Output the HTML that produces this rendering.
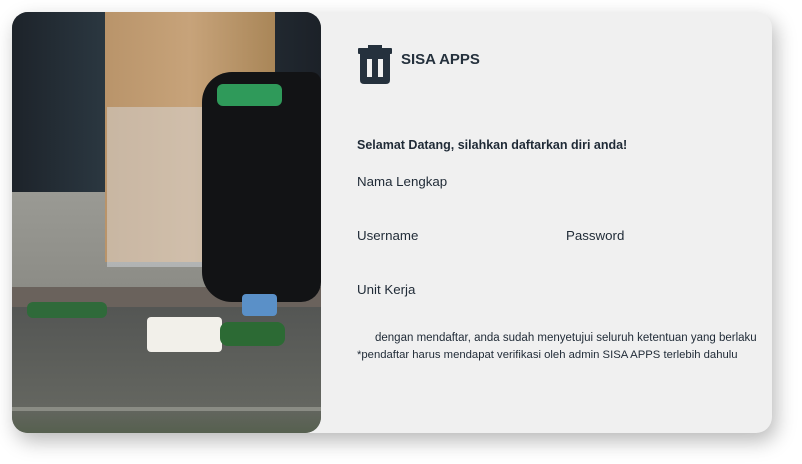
<!DOCTYPE html>
<html><head><style>
body{margin:0;width:802px;height:464px;background:#fff;font-family:"Liberation Sans",sans-serif;position:relative;overflow:hidden}
.card{position:absolute;left:12px;top:12px;width:760px;height:421px;background:#f0f0f0;border-radius:16px;box-shadow:4px 8px 20px rgba(0,0,0,.28)}
.photo{position:absolute;left:12px;top:12px;width:309px;height:421px;border-radius:16px;overflow:hidden;background:#5b5b58}
.photo div{position:absolute}
.t{position:absolute;color:#1f2a36;font-size:13px;white-space:nowrap}
</style></head><body>
<div class="card"></div>
<div class="photo">
 <div style="left:0;top:0;width:309px;height:180px;background:linear-gradient(90deg,#1d232a,#2f3e48 40%,#1c2128)"></div>
 <div style="left:0;top:180px;width:309px;height:110px;background:linear-gradient(#9a9a94,#8a8a84)"></div>
 <div style="left:0;top:275px;width:309px;height:20px;background:#6a625c"></div>
 <div style="left:0;top:295px;width:309px;height:126px;background:linear-gradient(#545654,#646660 80%,#56604f)"></div>
 <div style="left:0;top:395px;width:309px;height:4px;background:#8a8c84"></div>
 <div style="left:93px;top:0;width:170px;height:250px;background:linear-gradient(90deg,#b9946a,#c7a37a 50%,#a98658)"></div>
 <div style="left:95px;top:95px;width:100px;height:160px;background:rgba(220,225,230,.45)"></div>
 <div style="left:190px;top:60px;width:119px;height:230px;background:#121315;border-radius:30px 10px 20px 30px"></div>
 <div style="left:205px;top:72px;width:65px;height:22px;background:#2f9a5a;border-radius:6px"></div>
 <div style="left:135px;top:305px;width:75px;height:35px;background:#f2f0ea;border-radius:4px"></div>
 <div style="left:208px;top:310px;width:65px;height:24px;background:#2c6a34;border-radius:8px"></div>
 <div style="left:15px;top:290px;width:80px;height:16px;background:#2f6a3a;border-radius:6px"></div>
 <div style="left:230px;top:282px;width:35px;height:22px;background:#5a90c8;border-radius:4px"></div>
</div>
<svg style="position:absolute;left:358px;top:45px" width="34" height="39" viewBox="0 0 34 39"><rect x="10" y="0" width="14" height="3" fill="#25313d"/><rect x="0" y="3" width="34" height="6" rx="1" fill="#25313d"/><path d="M2 9H32V35Q32 39 28 39H6Q2 39 2 35Z" fill="#25313d"/><rect x="9" y="14" width="5" height="18" fill="#f0f0f0"/><rect x="20" y="14" width="5" height="18" fill="#f0f0f0"/></svg>
<div class="t" style="left:401px;top:51px;font-size:15px;font-weight:bold;color:#25313d">SISA APPS</div>
<div class="t" style="left:357px;top:138px;font-weight:bold;font-size:12.5px">Selamat Datang, silahkan daftarkan diri anda!</div>
<div class="t" style="left:357px;top:174px;font-size:13.3px">Nama Lengkap</div>
<div class="t" style="left:357px;top:228px;font-size:13.3px">Username</div>
<div class="t" style="left:566px;top:228px;font-size:13.3px">Password</div>
<div class="t" style="left:357px;top:282px;font-size:13.3px">Unit Kerja</div>
<div class="t" style="left:375px;top:332px;font-size:11.5px">dengan mendaftar, anda sudah menyetujui seluruh ketentuan yang berlaku</div>
<div class="t" style="left:357px;top:349px;font-size:11.3px">*pendaftar harus mendapat verifikasi oleh admin SISA APPS terlebih dahulu</div>
</body></html>
